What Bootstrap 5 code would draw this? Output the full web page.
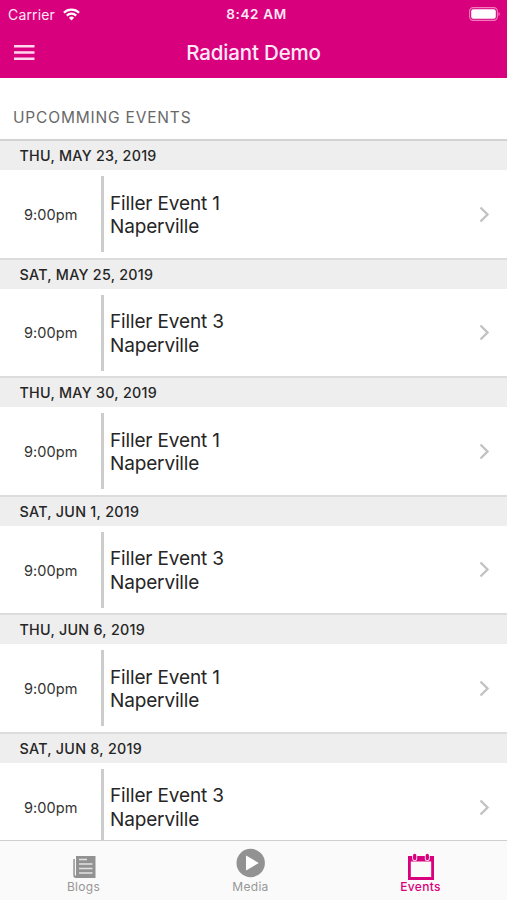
<!DOCTYPE html>
<html lang="en">
<head>
<meta charset="utf-8">
<meta name="viewport" content="width=device-width, initial-scale=1">
<title>Radiant Demo</title>
<link href="https://cdn.jsdelivr.net/npm/bootstrap@5.3.0/dist/css/bootstrap.min.css" rel="stylesheet">
<style>
body{font-family:Inter,"Liberation Sans",sans-serif;color:#262626;height:900px;overflow:hidden;background:#fff}
svg{display:block;flex:none}
.app-top{background:#d9007e;color:#ffe8f6;height:78px;flex:none}
.status{height:28px;padding:0 7px 0 8px;font-size:14px;line-height:27px}
.status>div{flex:1 1 0}
.carrier{letter-spacing:.15px}
.clock{font-weight:600;font-size:13.5px;letter-spacing:.65px;padding-left:5px}
.title-bar{height:50px;padding:0 14px}
.title-bar h1{font-size:20.5px;font-weight:500;line-height:50px;letter-spacing:-.15px}
.title-bar .side{width:21px}
.section-title{height:61px;flex:none;padding:30px 0 0 13px;font-size:15.5px;line-height:20px;letter-spacing:.82px;color:#686868}
.day{height:118.55px;flex:none}
.day-head{height:31px;border-top:2px solid #d2d2d2;background:#eee;padding-left:19.5px;font-size:14.3px;font-weight:500;line-height:30px;letter-spacing:.28px}
.day+.day .day-head{border-top-color:#dcdcdc}
.event{height:87.55px;padding:1px 17px 0 0}
.time{width:101px;padding:1px 0 0 24px;font-size:14.5px;letter-spacing:.07px;color:#333}
.what{height:76px;border-left:3px solid #ccc;padding:1.4px 0 0 6px;font-size:19px;line-height:23.3px;letter-spacing:-.15px}
.tabs{height:60px;border-top:1px solid #cfcfcf;background:#fafafa;font-size:12px;line-height:14px;color:#979797}
.tab{width:167px;padding-top:7px;letter-spacing:.3px}
.tab:last-child{width:173px}
.tab svg{margin-bottom:2px;overflow:visible}
.tab.active{color:#d9007e;font-weight:500}
</style>
<script src="https://cdn.jsdelivr.net/npm/bootstrap@5.3.0/dist/js/bootstrap.bundle.min.js"></script>
</head>
<body class="d-flex flex-column">
<header class="app-top">
  <div class="status d-flex align-items-center">
    <div class="d-flex align-items-center"><span class="carrier">Carrier</span>
      <svg class="ms-2" width="17" height="13" viewBox="0 0 17 13" fill="none" stroke="#fff" stroke-width="2.2"><path d="M.9 4.7a10.8 10.8 0 0 1 15.2 0M3.8 7.6a6.7 6.7 0 0 1 9.4 0"/><path d="M8.5 12.4 5.9 9.8a3.7 3.7 0 0 1 5.2 0z" fill="#fff" stroke="none"/></svg>
    </div>
    <span class="clock">8:42 AM</span>
    <div class="d-flex justify-content-end"><svg width="31" height="14" viewBox="0 0 31 14"><rect x=".6" y=".6" width="27.8" height="12.8" rx="3.6" fill="none" stroke="#f07dbd" stroke-width="1.1"/><rect x="2.2" y="2.2" width="24.6" height="9.6" rx="2" fill="#fff"/><path d="M29.5 5v4q1.3-.5 1.3-2t-1.3-2" fill="#f07dbd"/></svg></div>
  </div>
  <div class="title-bar d-flex align-items-center justify-content-between">
    <svg width="21" height="16" viewBox="0 0 21 16" fill="#ffd6ee"><path d="M0 0h20.5v2.5H0zM0 6.2h20.5v2.5H0zM0 12.4h20.5v2.5H0z"/></svg>
    <h1 class="m-0">Radiant Demo</h1><span class="side"></span>
  </div>
</header>
<h2 class="section-title m-0 fw-normal">UPCOMMING EVENTS</h2>
<main class="flex-grow-1 overflow-hidden" id="events"></main>
<nav class="tabs d-flex flex-shrink-0">
  <div class="tab d-flex flex-column align-items-center">
    <svg width="30" height="30" viewBox="0 0 30 30"><path d="M7 8h19.5v22H7a2.7 2.7 0 0 1-2.7-2.7V11h1.5v16q0 .8.6.8T7 27z" fill="#929292"/><path d="M10 11.5h8M10 16h13.5M10 20.5h13.5M10 25h13.5" stroke="#e2e2e2" stroke-width="1.4"/></svg>
    <span>Blogs</span>
  </div>
  <div class="tab d-flex flex-column align-items-center">
    <svg width="30" height="30" viewBox="0 0 30 30"><circle cx="14.7" cy="15" r="14.2" fill="#929292"/><path d="M10 7.5v15L22.8 15z" fill="#fff"/></svg>
    <span>Media</span>
  </div>
  <div class="tab active d-flex flex-column align-items-center">
    <svg width="30" height="30" viewBox="0 0 30 30"><path fill-rule="evenodd" d="M2 8h26v24H2zM4.800 13.5V29h20.400V13.5z" fill="#d9007e"/><path d="M8.700 7v3.500M21.300 7v3.500" stroke="#fafafa" stroke-width="5" stroke-linecap="round"/><path d="M8.700 7.500v3M21.300 7.500v3" stroke="#d9007e" stroke-width="3.300" stroke-linecap="round"/></svg>
    <span>Events</span>
  </div>
</nav>
<script>
const days=[["THU, MAY 23, 2019",1],["SAT, MAY 25, 2019",3],["THU, MAY 30, 2019",1],["SAT, JUN 1, 2019",3],["THU, JUN 6, 2019",1],["SAT, JUN 8, 2019",3]];
document.getElementById("events").innerHTML=days.map(([d,n])=>`<section class="day"><div class="day-head">${d}</div>
<div class="event d-flex align-items-center"><div class="time">9:00pm</div><div class="what flex-grow-1 d-flex flex-column justify-content-center"><span>Filler Event ${n}</span><span>Naperville</span></div>
<svg width="11" height="17" viewBox="0 0 11 17" fill="none" stroke="#c2c2c2" stroke-width="2.4"><path d="M1.5 1.5 8.5 8.5 1.5 15.5"/></svg></div></section>`).join("");
</script>
</body>
</html>
